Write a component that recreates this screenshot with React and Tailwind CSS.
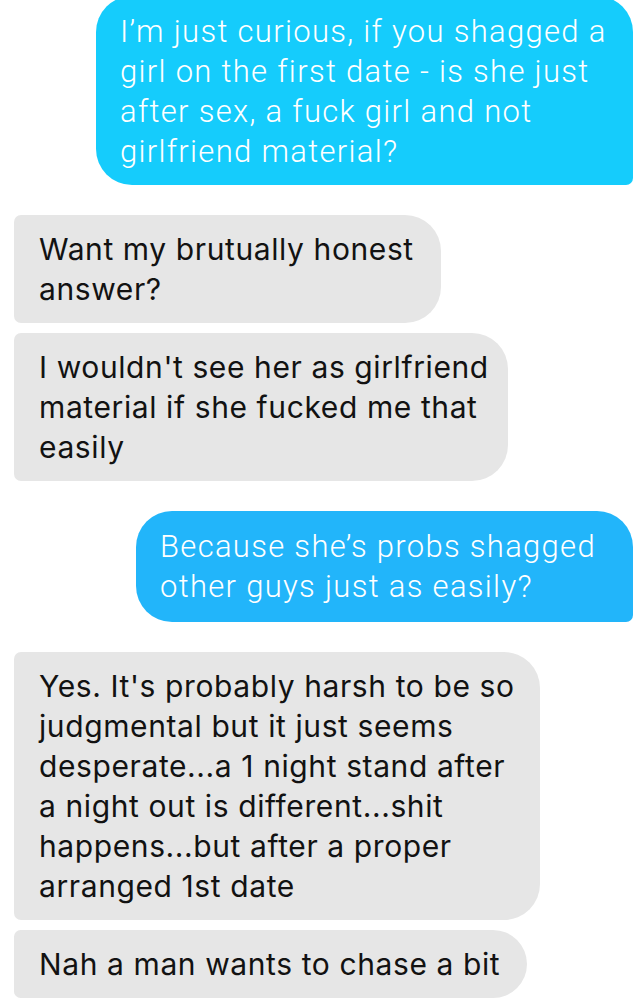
import React from 'react';

const messages = [
    {
        fromMe: true,
        width: 'w-[537px]',
        lines: [
            'I\u2019m just curious, if you shagged a',
            'girl on the first date - is she just',
            'after sex, a fuck girl and not',
            'girlfriend material?',
        ],
        gap: '-mt-[4px]',
    },
    {
        fromMe: false,
        width: 'w-[427px]',
        lines: ['Want my brutually honest', 'answer?'],
        gap: 'mt-[30px]',
    },
    {
        fromMe: false,
        width: 'w-[494px]',
        lines: ["I wouldn't see her as girlfriend", 'material if she fucked me that', 'easily'],
        gap: 'mt-[10px]',
    },
    {
        fromMe: true,
        width: 'w-[497px]',
        lines: ['Because she\u2019s probs shagged', 'other guys just as easily?'],
        gap: 'mt-[30px]',
        alt: true,
    },
    {
        fromMe: false,
        width: 'w-[526px]',
        lines: [
            "Yes. It's probably harsh to be so",
            'judgmental but it just seems',
            'desperate...a 1 night stand after',
            'a night out is different...shit',
            'happens...but after a proper',
            'arranged 1st date',
        ],
        gap: 'mt-[30px]',
    },
    {
        fromMe: false,
        width: 'w-[513px]',
        lines: ['Nah a man wants to chase a bit'],
        gap: 'mt-[10px]',
    },
];

const Bubble = ({ msg }) => {
    if (msg.fromMe) {
        return (
            <div className={`flex justify-end ${msg.gap}`}>
                <div
                    className={`${msg.width} ${msg.alt ? 'bg-[#22b5fa] pb-[15px]' : 'bg-[#15ccfc] pb-[13px]'} text-white rounded-l-[36px] rounded-tr-[36px] rounded-br-[7px] pl-6 pt-4 font-['Roboto',sans-serif] font-light text-[31px] leading-[40px] tracking-[1.3px]`}
                >
                    {msg.lines.map((line, i) => (
                        <div key={i} className="whitespace-nowrap">{line}</div>
                    ))}
                </div>
            </div>
        );
    }
    return (
        <div className={`flex justify-start ${msg.gap}`}>
            <div
                className={`${msg.width} bg-[#e6e6e6] text-[#121212] rounded-r-[36px] rounded-l-[7px] pl-[25px] pt-[14px] pb-[14px] font-['Inter',sans-serif] text-[30px] leading-[40px] tracking-[0.6px]`}
            >
                {msg.lines.map((line, i) => (
                    <div key={i} className="whitespace-nowrap">{line}</div>
                ))}
            </div>
        </div>
    );
};

export default function App() {
    return (
        <div className="w-[643px] h-[1008px] overflow-hidden bg-white pl-[14px] pr-[10px]">
            {messages.map((msg, i) => (
                <Bubble key={i} msg={msg} />
            ))}
        </div>
    );
}
